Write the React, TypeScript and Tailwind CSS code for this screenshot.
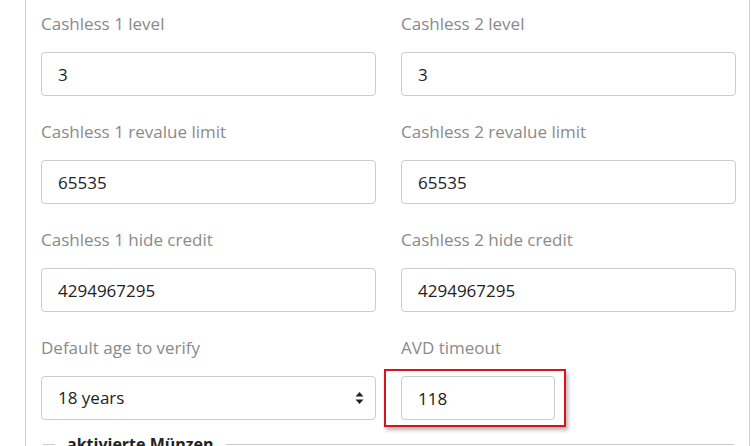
import React from "react";

type Field = {
  label: string;
  value: string;
};

const rows: Field[][] = [
  [
    { label: "Cashless 1 level", value: "3" },
    { label: "Cashless 2 level", value: "3" },
  ],
  [
    { label: "Cashless 1 revalue limit", value: "65535" },
    { label: "Cashless 2 revalue limit", value: "65535" },
  ],
  [
    { label: "Cashless 1 hide credit", value: "4294967295" },
    { label: "Cashless 2 hide credit", value: "4294967295" },
  ],
];

function TextField({ label, value }: Field) {
  return (
    <div className="flex flex-col">
      <label className="mb-4 h-6 text-[17px] leading-6 text-[#8a8a8a]">{label}</label>
      <input
        readOnly
        value={value}
        className="h-11 w-full rounded-[4px] border border-[#cccccc] bg-white px-4 text-[17px] text-[#222] outline-none"
      />
    </div>
  );
}

function SortArrows() {
  return (
    <svg width="9" height="14" viewBox="0 0 9 14" fill="#222">
      <path d="M4.5 1 L8.5 5.5 H0.5 Z" />
      <path d="M4.5 13 L8.5 8.5 H0.5 Z" />
    </svg>
  );
}

export default function App() {
  return (
    <div
      className="h-[446px] w-[754px] overflow-hidden bg-white pl-[25px]"
      style={{ fontFamily: '"Open Sans", "Liberation Sans", sans-serif' }}
    >
      <div className="h-full w-[725px] border-x border-[#d0d0d0] pl-[15px] pr-[13px] pt-3">
        <div className="grid grid-cols-2 gap-x-[25px] gap-y-6">
          {rows.map((row) =>
            row.map((field) => <TextField key={field.label} {...field} />)
          )}

          <div className="flex flex-col">
            <label className="mb-4 h-6 text-[17px] leading-6 text-[#8a8a8a]">
              Default age to verify
            </label>
            <div className="flex h-11 w-full items-center justify-between rounded-[4px] border border-[#cccccc] bg-white pl-4 pr-[11px] text-[17px] text-[#222]">
              <span>18 years</span>
              <SortArrows />
            </div>
          </div>

          <div className="flex flex-col">
            <label className="mb-4 h-6 text-[17px] leading-6 text-[#8a8a8a]">AVD timeout</label>
            <div className="relative w-[154px]">
              <input
                readOnly
                value="118"
                className="h-11 w-full rounded-[4px] border border-[#cccccc] bg-white px-4 text-[17px] text-[#222] outline-none"
              />
              <div className="pointer-events-none absolute -left-[17px] -top-[7px] h-[58px] w-[182px] border-2 border-[#d7141b] shadow-[2px_3px_4px_rgba(0,0,0,0.3)]" />
            </div>
          </div>
        </div>

        <fieldset className="mx-[2px] mt-[12px] border-t border-[#cccccc]">
          <legend className="ml-3 px-3 text-[16px] font-bold leading-6 text-[#222]">
            aktivierte Münzen
          </legend>
        </fieldset>
      </div>
    </div>
  );
}
